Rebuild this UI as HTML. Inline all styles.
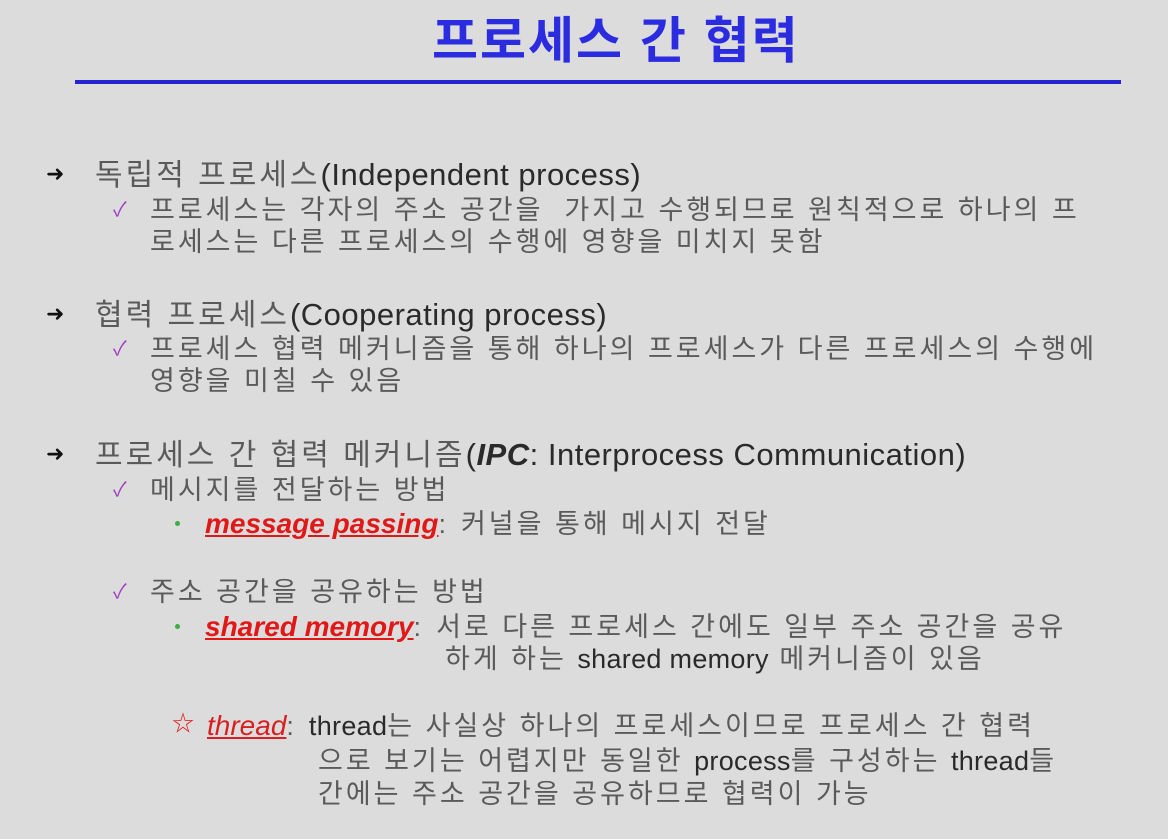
<!DOCTYPE html>
<html><head><meta charset="utf-8"><style>
body{margin:0;width:1168px;height:839px;background:#dcdcdc;overflow:hidden;position:relative;font-family:"Liberation Sans","Noto Sans CJK KR",sans-serif;}
.t{position:absolute;white-space:nowrap;color:#5a5a5a;line-height:1;}
.e{color:#2a2a2a;}
.l1{font-size:30px;letter-spacing:3px;}
.l1 .e{font-size:31px;letter-spacing:0.5px;}
.l2{font-size:27px;letter-spacing:3px;}
.l2 .e{letter-spacing:0.3px;}
.chk{position:absolute;color:#a040c0;font-size:20px;line-height:1;}
.arr{position:absolute;font-size:22px;line-height:1;color:#111;}
.dot{position:absolute;width:5px;height:5px;border-radius:50%;background:#3bb040;}
.red{color:#e01818;font-weight:bold;font-style:italic;text-decoration:underline;letter-spacing:0;font-size:28px;}
</style></head><body>
<div class="t" style="left:432px;top:16px;font-size:50px;font-weight:bold;color:#2b2be0;letter-spacing:2px;">프로세스 간 협력</div>
<div style="position:absolute;left:75px;top:80px;width:1046px;height:4px;background:#2424d0;"></div>

<div class="arr" style="left:46px;top:163px;">➜</div>
<div class="t l1" style="left:95px;top:159px;">독립적 프로세스<span class="e">(Independent process)</span></div>
<div class="chk" style="left:113px;top:200px;">✓</div>
<div class="t l2" style="left:150px;top:197px;">프로세스는 각자의 주소 공간을&nbsp; 가지고 수행되므로 원칙적으로 하나의 프</div>
<div class="t l2" style="left:150px;top:229px;">로세스는 다른 프로세스의 수행에 영향을 미치지 못함</div>

<div class="arr" style="left:46px;top:303px;">➜</div>
<div class="t l1" style="left:95px;top:299px;">협력 프로세스<span class="e">(Cooperating process)</span></div>
<div class="chk" style="left:113px;top:339px;">✓</div>
<div class="t l2" style="left:150px;top:336px;">프로세스 협력 메커니즘을 통해 하나의 프로세스가 다른 프로세스의 수행에</div>
<div class="t l2" style="left:150px;top:368px;">영향을 미칠 수 있음</div>

<div class="arr" style="left:46px;top:443px;">➜</div>
<div class="t l1" style="left:95px;top:439px;">프로세스 간 협력 메커니즘<span class="e">(<b><i>IPC</i></b>: Interprocess Communication)</span></div>
<div class="chk" style="left:113px;top:480px;">✓</div>
<div class="t l2" style="left:150px;top:477px;">메시지를 전달하는 방법</div>
<div class="dot" style="left:175px;top:521px;"></div>
<div class="t l2" style="left:205px;top:510px;"><span class="red">message passing</span><span style="letter-spacing:0">:&nbsp; </span>커널을 통해 메시지 전달</div>

<div class="chk" style="left:113px;top:582px;">✓</div>
<div class="t l2" style="left:150px;top:579px;">주소 공간을 공유하는 방법</div>
<div class="dot" style="left:175px;top:624px;"></div>
<div class="t l2" style="left:205px;top:613px;"><span class="red">shared memory</span><span style="letter-spacing:0">:&nbsp; </span>서로 다른 프로세스 간에도 일부 주소 공간을 공유</div>
<div class="t l2" style="left:445px;top:646px;">하게 하는 <span class="e">shared memory</span> 메커니즘이 있음</div>

<div class="t" style="left:172px;top:713px;font-size:22px;color:#e02020;">☆</div>
<div class="t l2" style="left:207px;top:712px;"><span class="red" style="font-weight:normal;color:#d82020;">thread</span><span style="letter-spacing:0">:&nbsp; </span><span class="e">thread</span>는 사실상 하나의 프로세스이므로 프로세스 간 협력</div>
<div class="t l2" style="left:318px;top:748px;">으로 보기는 어렵지만 동일한 <span class="e">process</span>를 구성하는 <span class="e">thread</span>들</div>
<div class="t l2" style="left:318px;top:781px;">간에는 주소 공간을 공유하므로 협력이 가능</div>
</body></html>
